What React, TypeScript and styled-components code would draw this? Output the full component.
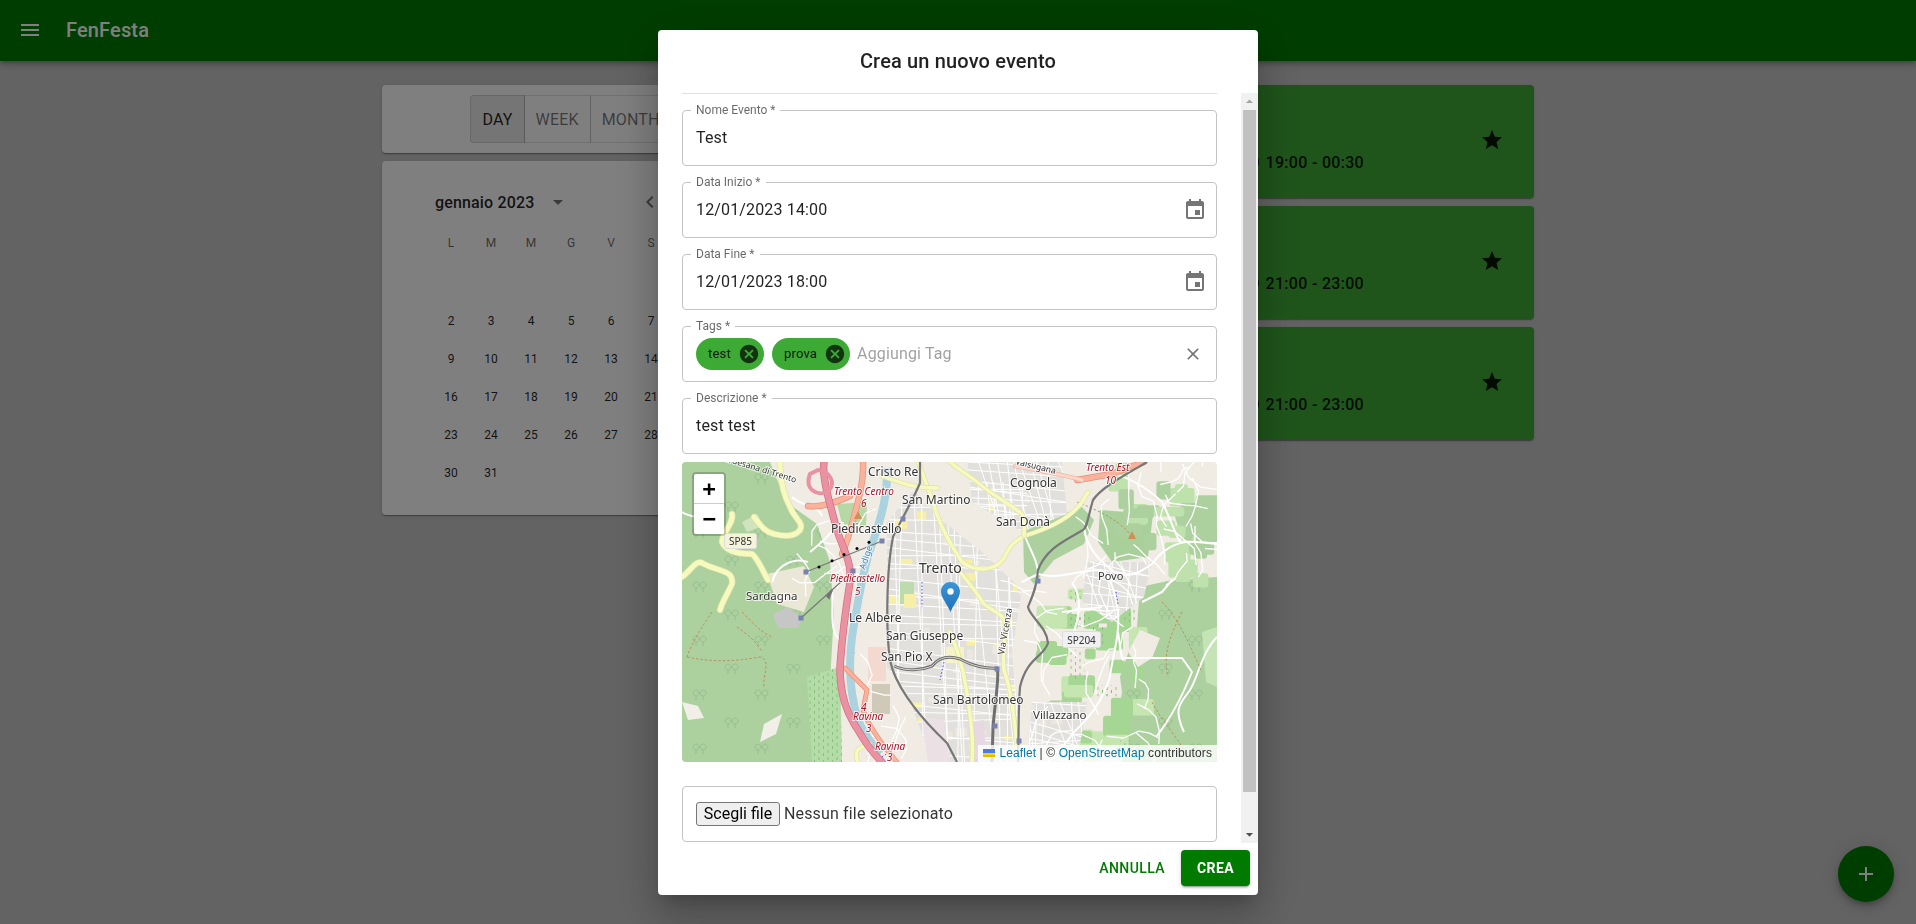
import React from 'react';
import styled, { createGlobalStyle } from 'styled-components';
import {
    MdAccessTime,
    MdAdd,
    MdArrowDropDown,
    MdArrowDropUp,
    MdCancel,
    MdChevronLeft,
    MdChevronRight,
    MdClose,
    MdEvent,
    MdMenu,
    MdStar,
} from 'react-icons/md';

const GREEN = '#007b00';
const LIGHT_GREEN = '#3eaa36';

const Global = createGlobalStyle`
    html, body { margin: 0; height: 100%; overflow: hidden; }
    body { background: #c6c6c6; font-family: Roboto, "Liberation Sans", sans-serif; color: rgba(0, 0, 0, 0.87); }
    * { box-sizing: border-box; }
`;

const Bar = styled.header`
    height: 61px;
    background: ${GREEN};
    color: #fff;
    display: flex;
    align-items: center;
    padding: 0 18px 2px;
    gap: 24px;
    box-shadow: 0 2px 4px -1px rgba(0, 0, 0, 0.2), 0 4px 5px 0 rgba(0, 0, 0, 0.14), 0 1px 10px 0 rgba(0, 0, 0, 0.12);
`;

const Brand = styled.div`
    font-size: 20px;
    font-weight: 500;
    letter-spacing: 0.15px;
`;

const Container = styled.main`
    width: 1152px;
    margin: 24px auto 0;
    display: grid;
    grid-template-columns: 378px 1fr;
    gap: 8px;
`;

const Column = styled.div`
    display: flex;
    flex-direction: column;
    gap: 8px;
`;

const Paper = styled.section`
    background: #fff;
    border-radius: 4px;
    box-shadow: 0 2px 1px -1px rgba(0, 0, 0, 0.2), 0 1px 1px 0 rgba(0, 0, 0, 0.14), 0 1px 3px 0 rgba(0, 0, 0, 0.12);
`;

const ViewPaper = styled(Paper)`
    height: 68px;
    display: flex;
    justify-content: center;
    align-items: center;
`;

const ToggleGroup = styled.div`
    display: flex;
    height: 48px;
`;

const Toggle = styled.button<{ $active?: boolean }>`
    font: 400 16px Roboto, sans-serif;
    letter-spacing: 0.15px;
    padding: 0 11px;
    border: 1px solid rgba(0, 0, 0, 0.12);
    margin-left: -1px;
    color: ${(p) => (p.$active ? 'rgba(0,0,0,0.87)' : 'rgba(0,0,0,0.54)')};
    background: ${(p) => (p.$active ? 'rgba(0,0,0,0.08)' : 'transparent')};
    &:first-child { border-radius: 4px 0 0 4px; margin-left: 0; }
    &:last-child { border-radius: 0 4px 4px 0; }
`;

const CalendarPaper = styled(Paper)`
    height: 354px;
    padding-top: 27px;
`;

const Calendar = styled.div`
    width: 280px;
    margin: 0 auto;
`;

const MonthRow = styled.div`
    height: 28px;
    padding-left: 4px;
    display: flex;
    align-items: center;
    color: rgba(0, 0, 0, 0.54);
`;

const MonthName = styled.span`
    font-size: 16px;
    font-weight: 500;
    letter-spacing: 0.15px;
    color: rgba(0, 0, 0, 0.87);
    margin-right: 12px;
`;

const MonthNav = styled.span`
    margin-left: auto;
    display: flex;
    gap: 16px;
    padding-right: 9px;
`;

const DayGrid = styled.div<{ $head?: boolean }>`
    display: grid;
    grid-template-columns: repeat(7, 40px);
    grid-auto-rows: 38px;
    margin-top: ${(p) => (p.$head ? '8px' : '2px')};
    font-size: 12px;
    color: ${(p) => (p.$head ? 'rgba(0,0,0,0.6)' : 'rgba(0,0,0,0.87)')};
`;

const DayCell = styled.span`
    display: flex;
    align-items: center;
    justify-content: center;
`;

const EventCard = styled.article`
    height: 113px;
    background: ${LIGHT_GREEN};
    border-radius: 4px;
    display: flex;
    align-items: center;
    justify-content: flex-end;
    padding-right: 30px;
    box-shadow: 0 2px 1px -1px rgba(0, 0, 0, 0.2), 0 1px 1px 0 rgba(0, 0, 0, 0.14), 0 1px 3px 0 rgba(0, 0, 0, 0.12);
    > svg { margin-top: -3px; }
`;

const EventTime = styled.div`
    display: flex;
    align-items: center;
    gap: 5px;
    margin: 41px 116px 0 0;
    font-size: 16px;
    font-weight: 500;
    letter-spacing: 0.3px;
`;

const Fab = styled.button`
    position: fixed;
    right: 22px;
    bottom: 22px;
    width: 56px;
    height: 56px;
    border: 0;
    border-radius: 50%;
    background: ${GREEN};
    color: #fff;
    display: flex;
    align-items: center;
    justify-content: center;
    box-shadow: 0 3px 5px -1px rgba(0, 0, 0, 0.2), 0 6px 10px 0 rgba(0, 0, 0, 0.14), 0 1px 18px 0 rgba(0, 0, 0, 0.12);
`;

const Backdrop = styled.div`
    position: fixed;
    inset: 0;
    background: rgba(0, 0, 0, 0.5);
    display: flex;
    align-items: center;
    justify-content: center;
`;

const Dialog = styled.div`
    width: 600px;
    height: 865px;
    background: #fff;
    border-radius: 4px;
    display: flex;
    flex-direction: column;
    overflow: hidden;
    box-shadow: 0 11px 15px -7px rgba(0, 0, 0, 0.2), 0 24px 38px 3px rgba(0, 0, 0, 0.14), 0 9px 46px 8px rgba(0, 0, 0, 0.12);
`;

const DialogTitle = styled.h2`
    margin: 0;
    height: 63px;
    flex: none;
    display: flex;
    align-items: center;
    justify-content: center;
    font-size: 20px;
    font-weight: 500;
    letter-spacing: 0.15px;
`;

const DialogBody = styled.div`
    flex: 1;
    min-height: 0;
    display: flex;
`;

const Form = styled.div`
    flex: 1;
    min-width: 0;
    padding: 0 24px;
    overflow: hidden;
`;

const Divider = styled.hr`
    margin: 0;
    border: 0;
    border-top: 1px solid #e0e0e0;
    height: 17px;
`;

const Field = styled.div`
    position: relative;
    height: 56px;
    margin-bottom: 16px;
    padding: 0 13px;
    border: 1px solid #c4c4c4;
    border-radius: 4px;
    display: flex;
    align-items: center;
    font-size: 16px;
    letter-spacing: 0.15px;
    &:last-child { margin-bottom: 0; }
`;

const FieldLabel = styled.label`
    position: absolute;
    top: -7px;
    left: 8px;
    padding: 0 5px;
    background: #fff;
    font-size: 12px;
    line-height: 12px;
    letter-spacing: 0;
    color: rgba(0, 0, 0, 0.6);
`;

const FieldIcon = styled.span<{ $calendar?: boolean }>`
    margin-left: auto;
    margin-right: ${(p) => (p.$calendar ? '-4px' : '0')};
    display: flex;
    color: rgba(0, 0, 0, 0.54);
`;

const Chip = styled.span`
    height: 32px;
    border-radius: 16px;
    background: ${LIGHT_GREEN};
    display: inline-flex;
    align-items: center;
    padding: 0 4px 0 12px;
    gap: 7px;
    font-size: 13px;
    letter-spacing: 0.2px;
    margin-right: 8px;
    color: rgba(0, 0, 0, 0.87);
    svg { color: rgba(0, 0, 0, 0.7); }
`;

const Placeholder = styled.span`
    color: rgba(0, 0, 0, 0.38);
    font-size: 16px;
    margin-left: -1px;
`;

const FileButton = styled.button`
    height: 24px;
    width: 84px;
    padding: 0;
    margin-right: 4px;
    background: #efefef;
    border: 1px solid #767676;
    border-radius: 3px;
    font: 400 16px Roboto, sans-serif;
    color: #000;
`;

const FileName = styled.span`
    color: rgba(0, 0, 0, 0.8);
`;

const MapBox = styled.div`
    position: relative;
    height: 300px;
    margin: -8px 0 24px;
    border-radius: 4px;
    overflow: hidden;
    svg.map { display: block; width: 100%; height: 100%; }
`;

const ZoomControl = styled.div`
    position: absolute;
    top: 10px;
    left: 10px;
    width: 34px;
    border: 2px solid rgba(0, 0, 0, 0.2);
    border-radius: 4px;
    background-clip: padding-box;
`;

const ZoomButton = styled.div`
    height: 30px;
    background: #fff;
    color: #000;
    display: flex;
    align-items: center;
    justify-content: center;
    font: 700 22px "DejaVu Sans Mono", "Liberation Mono", monospace;
    &:first-child { border-bottom: 1px solid #ccc; border-radius: 2px 2px 0 0; }
    &:last-child { border-radius: 0 0 2px 2px; }
`;

const Attribution = styled.div`
    position: absolute;
    right: 0;
    bottom: 0;
    height: 17px;
    padding: 0 5px;
    display: flex;
    align-items: center;
    gap: 4px;
    background: rgba(255, 255, 255, 0.8);
    font: 12px "Liberation Sans", Arial, sans-serif;
    letter-spacing: 0.1px;
    color: #333;
    white-space: pre;
`;

const AttrLink = styled.a`
    color: #0078a8;
`;

const Scrollbar = styled.div`
    flex: none;
    width: 17px;
    background: #f1f1f1;
    display: flex;
    flex-direction: column;
    align-items: center;
`;

const ScrollArrow = styled.div`
    flex: none;
    height: 17px;
    width: 17px;
    display: flex;
    align-items: center;
    justify-content: center;
    color: #a3a3a3;
    &:last-child { color: #505050; }
`;

const ScrollThumb = styled.div`
    width: 13px;
    height: 682px;
    background: #c1c1c1;
`;

const ScrollGap = styled.div`
    flex: 1;
`;

const DialogActions = styled.div`
    height: 52px;
    flex: none;
    display: flex;
    align-items: center;
    justify-content: flex-end;
    padding: 0 8px 1px;
    gap: 8px;
`;

const TextButton = styled.button`
    height: 36px;
    padding: 0 8px;
    border: 0;
    background: none;
    color: ${GREEN};
    font: 500 14px Roboto, sans-serif;
    letter-spacing: 0.4px;
`;

const SolidButton = styled.button`
    height: 36px;
    width: 69px;
    border: 0;
    border-radius: 4px;
    background: ${GREEN};
    color: #fff;
    font: 700 14px Roboto, sans-serif;
    letter-spacing: 0.4px;
    box-shadow: 0 3px 1px -2px rgba(0, 0, 0, 0.2), 0 2px 2px 0 rgba(0, 0, 0, 0.14), 0 1px 5px 0 rgba(0, 0, 0, 0.12);
`;

const FlagIcon = styled.svg`
    width: 12px;
    height: 8px;
`;

const MapLabel = styled.text<{ $tone?: 'place' | 'exit' | 'water' }>`
    font-family: 'Noto Sans', 'Open Sans', sans-serif;
    font-style: ${(p) => (p.$tone === 'exit' ? 'italic' : 'normal')};
    fill: ${(p) => (p.$tone === 'exit' ? '#a6162b' : p.$tone === 'water' ? '#4f7fb0' : '#333')};
    stroke: #fff;
    stroke-width: 2px;
    stroke-opacity: 0.75;
    paint-order: stroke;
`;

// small seeded generator, the map detail has to stay the same between runs
function seeded(seed: number) {
    let s = seed;
    return () => {
        s = (s * 9301 + 49297) % 233280;
        return s / 233280;
    };
}

function streetGrid(x: number, y: number, w: number, h: number, step: number, seed: number) {
    const rnd = seeded(seed);
    let d = '';
    for (let i = x; i < x + w; i += step * (0.7 + rnd() * 0.8)) {
        d += `M${i.toFixed(1)} ${y}L${(i + 40 * rnd() - 10).toFixed(1)} ${y + h}`;
    }
    for (let j = y; j < y + h; j += step * (0.7 + rnd() * 0.8)) {
        d += `M${x} ${j.toFixed(1)}L${x + w} ${(j + 30 * rnd() - 5).toFixed(1)}`;
    }
    return d;
}

function wiggles(x: number, y: number, w: number, h: number, count: number, seed: number) {
    const rnd = seeded(seed);
    let d = '';
    for (let i = 0; i < count; i++) {
        let px = x + rnd() * w;
        let py = y + rnd() * h;
        let angle = rnd() * Math.PI * 2;
        d += `M${px.toFixed(1)} ${py.toFixed(1)}`;
        for (let k = 0; k < 4; k++) {
            angle += rnd() * 1.6 - 0.8;
            px += Math.cos(angle) * (6 + rnd() * 12);
            py += Math.sin(angle) * (6 + rnd() * 12);
            d += `L${px.toFixed(1)} ${py.toFixed(1)}`;
        }
    }
    return d;
}

function patches(x: number, y: number, w: number, h: number, count: number, seed: number, size = 1) {
    const rnd = seeded(seed);
    const out = [];
    for (let i = 0; i < count; i++) {
        out.push({ x: x + rnd() * w, y: y + rnd() * h, w: (4 + rnd() * 9) * size, h: (3 + rnd() * 7) * size });
    }
    return out;
}

const yellowRoads = [
    'M98 0C98 15 100 30 108 45C113 58 122 60 118 68C112 76 100 74 92 72C82 70 78 62 72 55',
    'M50 52C52 62 40 70 40 80C44 90 58 92 70 92C76 96 82 112 86 118',
    'M0 115C10 108 14 96 22 102C38 110 52 108 50 122C44 135 40 140 38 148',
    'M236 0C244 20 250 38 256 55C262 72 270 84 280 100C296 112 318 108 324 92C330 80 336 78 342 74C362 68 388 58 400 40L406 30',
    'M268 0C280 10 290 15 300 24C312 34 328 42 340 52C344 60 342 66 342 74',
    'M278 110C288 122 296 132 302 142C312 150 322 152 324 162C322 180 320 195 322 208C328 225 332 245 336 300',
    'M268 170C274 185 280 200 284 225C288 250 292 275 290 300',
    'M200 14C216 20 230 26 256 26',
    'M176 300C172 290 174 286 188 282',
];

const whiteRoads = [
    'M402 66C406 90 420 100 432 110C450 118 460 108 470 102C480 88 495 78 515 80L535 82',
    'M356 112C378 118 396 108 418 108C428 112 432 126 436 150C438 175 430 195 428 215C420 240 408 255 392 270C382 285 372 292 366 300',
    'M436 170L440 196H500L510 210C500 235 490 255 474 275',
    'M342 72C350 92 356 100 356 112L340 120',
    'M420 12C440 8 470 30 480 40C488 55 492 70 498 80',
    'M460 140L480 130 490 118',
    'M380 150L420 145',
    'M535 175C520 190 516 215 508 228C500 240 490 245 502 270',
    'M390 120C400 135 398 150 392 170',
    'M0 50C6 55 20 55 30 60',
    'M110 35C120 45 136 42 140 54',
    'M128 90C140 80 150 72 156 60',
    'M90 120C96 100 114 96 126 100',
    'M150 130C152 150 146 170 160 180',
];

const places: [string, number, number, number][] = [
    ['Cristo Re', 186, 14, 12],
    ['San Martino', 220, 42, 12],
    ['Cognola', 328, 25, 12],
    ['San Donà', 314, 64, 12],
    ['Piedicastello', 149, 71, 12],
    ['Trento', 237, 111, 14],
    ['Povo', 416, 118, 11],
    ['Sardagna', 64, 138, 11.5],
    ['Le Albere', 167, 160, 12],
    ['San Giuseppe', 204, 178, 12],
    ['San Pio X', 199, 199, 12],
    ['San Bartolomeo', 251, 242, 12],
    ['Villazzano', 351, 257, 11.5],
];

const exits: [string, number, number][] = [
    ['Trento Centro', 152, 33],
    ['6', 179, 45],
    ['Piedicastello', 148, 120],
    ['5', 173, 133],
    ['4', 179, 249],
    ['Ravina', 171, 258],
    ['3', 184, 270],
    ['Ravina', 193, 288],
    ['3', 205, 299],
    ['Trento Est', 404, 9],
    ['10', 423, 22],
];

const stations: [number, number][] = [
    [221, 57],
    [356, 119],
    [315, 207],
    [313, 264],
    [337, 279],
    [124, 110],
    [200, 79],
    [171, 109],
    [119, 156],
];

const WEST_WOOD = 'M0 0H88L104 40 135 62 148 100 152 150 148 220 150 300H0Z';
const EAST_WOOD = 'M458 125 490 118 535 115V300H438L432 280 440 230 438 215 455 165Z';

function MapRoad({ d, w, fill, edge }: { d: string; w: number; fill: string; edge: string }) {
    return (
        <g fill='none' strokeLinecap='round' strokeLinejoin='round'>
            <path d={d} stroke={edge} strokeWidth={w + 1.4} />
            <path d={d} stroke={fill} strokeWidth={w} />
        </g>
    );
}

function TrentoMap() {
    return (
        <svg className='map' viewBox='0 0 535 300'>
            <defs>
                <pattern id='trees' width='62' height='54' patternUnits='userSpaceOnUse'>
                    <path
                        d='M14 18a3 3 0 1 1 .1 0zM14 18v4M21 18a3 3 0 1 1 .1 0zM21 18v4M46 46a3 3 0 1 1 .1 0zM46 46v4M53 46a3 3 0 1 1 .1 0zM53 46v4'
                        fill='none'
                        stroke='#8fb98a'
                        strokeWidth='0.8'
                    />
                </pattern>
                <pattern id='orchard' width='9' height='7' patternUnits='userSpaceOnUse'>
                    <path d='M2 1v3M6.5 4v3' stroke='#7fb878' strokeWidth='0.8' />
                </pattern>
                <clipPath id='urban'>
                    <path d='M205 60 232 28 262 60 300 90 340 128 330 190 340 300 250 300 225 230 205 205Z' />
                    <path d='M285 0H380L385 52 340 70 290 40Z' />
                    <path d='M405 100H470L462 135 430 160 400 140Z' />
                    <path d='M350 240 405 240 395 300 345 300Z' />
                </clipPath>
                <linearGradient id='pin' x1='0' y1='0' x2='0' y2='1'>
                    <stop offset='0' stopColor='#3a95d8' />
                    <stop offset='1' stopColor='#1f72b8' />
                </linearGradient>
            </defs>

            <rect width='535' height='300' fill='#f0ece4' />

            {/* woods on both sides of the valley */}
            <path d={WEST_WOOD} fill='#add19e' />
            <path d={WEST_WOOD} fill='url(#trees)' />
            <path d={EAST_WOOD} fill='#add19e' />
            <path d={EAST_WOOD} fill='url(#trees)' />
            <path d='M341 68 400 45 412 58 402 82 372 98 352 122 342 110Z' fill='#add19e' />
            <path d='M418 48 471 52 466 95 430 100 416 80Z' fill='#a9d09a' />
            <path d='M491 48 535 42V82L500 78Z' fill='#add19e' />
            <path d='M301 0H325V20L305 21Z' fill='#c8f0c8' />
            <path d='M155 42 185 40 184 64 160 62Z' fill='#b5d8a5' />
            <path d='M125 215 158 205 160 300H130Z' fill='#b4dca6' />
            <path d='M125 215 158 205 160 300H130Z' fill='url(#orchard)' />

            {/* farmland on the eastern slope */}
            {patches(345, 122, 105, 170, 34, 5, 2.6).map((b, i) => (
                <rect key={i} x={b.x} y={b.y} width={b.w} height={b.h} rx='3' fill={i % 3 ? '#a6d693' : '#c5e6b0'} />
            ))}
            {patches(345, 122, 105, 170, 12, 17, 2.2).map((b, i) => (
                <rect key={i} x={b.x} y={b.y} width={b.w} height={b.h} fill='url(#orchard)' />
            ))}
            {patches(425, 0, 110, 112, 26, 9, 2.4).map((b, i) => (
                <rect key={i} x={b.x} y={b.y} width={b.w} height={b.h} rx='3' fill={i % 2 ? '#add19e' : '#bfe2ad'} />
            ))}
            <path d='M458 168 478 176 470 196 456 205 446 190Z' fill='#f0ece4' />

            {/* clearings and villages */}
            <path d='M85 112 122 104 132 125 122 150 95 142Z' fill='#ebe7d6' />
            <path d='M82 262 100 252 94 272 78 280Z' fill='#f2efe9' />
            <path d='M0 240 16 244 22 256 6 258Z' fill='#f2efe9' />
            <path d='M91 152 106 145 120 156 116 166 96 166Z' fill='#c6c6c6' />
            <path d='M60 60 75 52 82 64 65 70Z' fill='#cfe3bc' />
            <path d='M520 170 535 165V225L524 220Z' fill='#c4e4b6' />

            {/* built up area */}
            <g clipPath='url(#urban)'>
                <rect width='535' height='300' fill='#e2e0dc' />
                {patches(205, 30, 180, 270, 70, 11).map((b, i) => (
                    <rect key={i} x={b.x} y={b.y} width={b.w} height={b.h} fill={i % 3 ? '#ece8e0' : '#f5efa8'} />
                ))}
                <path d={streetGrid(195, 20, 150, 280, 8, 7)} stroke='#fff' strokeWidth='1' fill='none' />
                <path d={streetGrid(285, 0, 100, 70, 8, 23)} stroke='#fff' strokeWidth='1' fill='none' />
                <path d={streetGrid(400, 98, 72, 65, 8, 41)} stroke='#fff' strokeWidth='1' fill='none' />
                <path d={streetGrid(345, 240, 60, 60, 8, 31)} stroke='#fff' strokeWidth='1' fill='none' />
            </g>
            <rect x='186' y='185' width='18' height='34' fill='#f3d9cf' />
            <rect x='190' y='222' width='18' height='30' fill='#cfc9b8' />
            <path d='M240 255 262 258 268 300H246Z' fill='#ebe0e4' />
            <path d='M288 260 302 258 304 300H292Z' fill='#e8d8e4' />
            <rect x='264' y='185' width='18' height='16' fill='#f6f3c9' />
            <rect x='218' y='120' width='14' height='22' fill='#bcdcb0' />
            <rect x='222' y='132' width='12' height='14' fill='#f5efa8' />

            <g fill='none' stroke='#fff' strokeLinejoin='round'>
                <path d={whiteRoads.join('')} strokeWidth='2' />
                <path d={wiggles(345, 110, 120, 190, 26, 3)} strokeWidth='1.3' />
                <path d={wiggles(420, 0, 115, 112, 22, 13)} strokeWidth='1.3' />
                <path d={wiggles(100, 30, 65, 110, 9, 29)} strokeWidth='1.3' />
                <path d={wiggles(168, 210, 45, 85, 7, 37)} strokeWidth='1.3' />
            </g>

            {/* trails */}
            <path
                d='M5 195C30 200 50 200 78 195C90 198 80 215 82 225M55 165C65 172 75 180 80 190M30 150C20 165 10 180 5 195M480 140C500 160 510 190 520 210M470 240C480 260 500 280 505 295M395 40C420 50 440 60 450 75M60 150C70 160 78 170 90 175M500 150C490 170 480 190 486 215'
                fill='none'
                stroke='#b9824d'
                strokeWidth='0.8'
                strokeDasharray='2.5 2'
            />
            <path
                d='M172 190C168 215 165 240 175 262M240 120V145M200 295L215 285M262 200L258 218M434 130L436 142'
                fill='none'
                stroke='#3c3cf0'
                strokeWidth='0.9'
                strokeDasharray='1.5 2'
            />

            {/* river and main roads */}
            <path
                d='M205 6C206 30 201 52 188 88C180 112 174 150 170 175C166 205 168 232 176 258C182 272 190 282 198 292'
                fill='none'
                stroke='#aad3df'
                strokeWidth='8'
            />
            {yellowRoads.map((d, i) => (
                <MapRoad key={i} d={d} w={i < 3 ? 5 : 3.5} fill='#f7fabf' edge='#dfe0a6' />
            ))}
            <MapRoad d='M181 0C182 20 176 40 171 58C168 70 165 80 160 92M126 44C140 46 155 40 168 34' w={5} fill='#f9b29c' edge='#e88f78' />
            <MapRoad d='M163 206 185 228 181 248C186 262 196 278 215 300' w={3.5} fill='#f9b29c' edge='#e88f78' />
            <MapRoad d='M395 18 430 12 462 0' w={5} fill='#f9b29c' edge='#e88f78' />
            <MapRoad d='M333 4C355 8 385 14 400 18' w={3} fill='#fcd6c8' edge='#e8b8a6' />
            <MapRoad
                d='M142 0C140 14 146 36 155 68C162 90 170 100 168 120C164 145 160 175 158 205C158 232 164 250 176 268C184 282 192 292 200 300'
                w={6}
                fill='#e892a2'
                edge='#d66a80'
            />
            <path d='M128 12C122 28 136 34 144 30C156 24 148 8 136 8Z' fill='none' stroke='#e892a2' strokeWidth='4' />

            {/* railways */}
            <path
                d='M238 0V21C230 40 218 60 211 75C204 110 204 170 208 198C212 220 232 250 265 281L275 300M465 0C440 15 420 25 411 38C406 55 405 66 401 68C385 78 365 85 356 108C355 125 350 135 346 145C348 155 365 165 366 181C362 195 345 195 338 225C336 250 337 270 336 300'
                fill='none'
                stroke='#777'
                strokeWidth='2.2'
            />
            <path
                d='M212 204C225 210 240 208 250 204C258 194 268 194 278 197C290 204 305 207 315 206C318 212 313 240 311 265L310 300'
                fill='none'
                stroke='#6f6f6f'
                strokeWidth='3'
            />
            <path d='M212 204C225 210 240 208 250 204C258 194 268 194 278 197C290 204 305 207 315 206' fill='none' stroke='#fff' strokeWidth='0.7' />

            {/* cable cars */}
            <path d='M124 110 200 79M119 156 171 109' stroke='#777' strokeWidth='1.1' />
            {[137, 150, 162, 175, 187].map((x, i) => (
                <circle key={x} cx={x} cy={105 - i * 6.2} r='1.5' fill='#000' />
            ))}
            <path d='M145 134 150 128 147 136Z' stroke='#777' strokeWidth='2' />
            {stations.map(([x, y]) => (
                <rect key={`${x}-${y}`} x={x - 2.5} y={y - 2.5} width='5' height='5' fill='#7981b1' />
            ))}
            <path d='M450 69 454 77H446ZM176 49 180 57H172Z' fill='#cf8f57' />

            {/* labels */}
            {places.map(([name, x, y, size]) => (
                <MapLabel key={name} x={x} y={y} fontSize={size}>
                    {name}
                </MapLabel>
            ))}
            {exits.map(([name, x, y], i) => (
                <MapLabel key={i} $tone='exit' x={x} y={y} fontSize='10'>
                    {name}
                </MapLabel>
            ))}
            <MapLabel $tone='water' x='0' y='0' fontSize='9' transform='translate(183 108) rotate(-72)'>
                Adige
            </MapLabel>
            <MapLabel x='0' y='0' fontSize='9' transform='translate(322 193) rotate(-80)'>
                Via Vicenza
            </MapLabel>
            <MapLabel x='0' y='0' fontSize='8.5' transform='translate(36 -3) rotate(17)'>
                Gardesana di Trento
            </MapLabel>
            <MapLabel x='0' y='0' fontSize='8.5' transform='translate(333 2) rotate(14)'>
                Valsugana
            </MapLabel>

            <rect x='42.5' y='71.5' width='32' height='15' rx='2' fill='#f4f4da' stroke='#ddd' />
            <text x='58.5' y='83' fontSize='10' fontFamily='Noto Sans, sans-serif' textAnchor='middle' fill='#333'>
                SP85
            </text>
            <rect x='380.5' y='169.5' width='38' height='16' rx='2' fill='#f1f1f1' stroke='#ddd' />
            <text x='399.5' y='181.5' fontSize='10' fontFamily='Noto Sans, sans-serif' textAnchor='middle' fill='#333'>
                SP204
            </text>

            {/* marker */}
            <path
                d='M268.5 120C262.5 120 259 124.8 259 129.5C259 136 266 143 268.5 150C271 143 278 136 278 129.5C278 124.8 274.5 120 268.5 120Z'
                fill='url(#pin)'
            />
            <circle cx='268.5' cy='129.5' r='3.2' fill='#fff' />
        </svg>
    );
}

const weekdays = ['L', 'M', 'M', 'G', 'V', 'S', 'D'];
const days = [...Array(6).fill(''), ...Array.from({ length: 31 }, (_, i) => String(i + 1))];
const events = ['19:00 - 00:30', '21:00 - 23:00', '21:00 - 23:00'];

export default function App() {
    return (
        <>
            <Global />
            <Bar>
                <MdMenu size={24} />
                <Brand>FenFesta</Brand>
            </Bar>

            <Container>
                <Column>
                    <ViewPaper>
                        <ToggleGroup>
                            <Toggle $active>DAY</Toggle>
                            <Toggle>WEEK</Toggle>
                            <Toggle>MONTH</Toggle>
                        </ToggleGroup>
                    </ViewPaper>
                    <CalendarPaper>
                        <Calendar>
                            <MonthRow>
                                <MonthName>gennaio 2023</MonthName>
                                <MdArrowDropDown size={24} />
                                <MonthNav>
                                    <MdChevronLeft size={24} />
                                    <MdChevronRight size={24} />
                                </MonthNav>
                            </MonthRow>
                            <DayGrid $head>
                                {weekdays.map((d, i) => (
                                    <DayCell key={i}>{d}</DayCell>
                                ))}
                            </DayGrid>
                            <DayGrid>
                                {days.map((d, i) => (
                                    <DayCell key={i}>{d}</DayCell>
                                ))}
                            </DayGrid>
                        </Calendar>
                    </CalendarPaper>
                </Column>
                <Column>
                    {events.map((time, i) => (
                        <EventCard key={i}>
                            <EventTime>
                                <MdAccessTime size={24} />
                                {time}
                            </EventTime>
                            <MdStar size={24} />
                        </EventCard>
                    ))}
                </Column>
            </Container>

            <Fab>
                <MdAdd size={24} />
            </Fab>

            <Backdrop>
                <Dialog>
                    <DialogTitle>Crea un nuovo evento</DialogTitle>
                    <DialogBody>
                        <Form>
                            <Divider />
                            <Field>
                                <FieldLabel>Nome Evento *</FieldLabel>
                                Test
                            </Field>
                            <Field>
                                <FieldLabel>Data Inizio *</FieldLabel>
                                12/01/2023 14:00
                                <FieldIcon $calendar>
                                    <MdEvent size={24} />
                                </FieldIcon>
                            </Field>
                            <Field>
                                <FieldLabel>Data Fine *</FieldLabel>
                                12/01/2023 18:00
                                <FieldIcon $calendar>
                                    <MdEvent size={24} />
                                </FieldIcon>
                            </Field>
                            <Field>
                                <FieldLabel>Tags *</FieldLabel>
                                <Chip>
                                    test
                                    <MdCancel size={22} />
                                </Chip>
                                <Chip>
                                    prova
                                    <MdCancel size={22} />
                                </Chip>
                                <Placeholder>Aggiungi Tag</Placeholder>
                                <FieldIcon>
                                    <MdClose size={20} />
                                </FieldIcon>
                            </Field>
                            <Field>
                                <FieldLabel>Descrizione *</FieldLabel>
                                test test
                            </Field>
                            <MapBox>
                                <TrentoMap />
                                <ZoomControl>
                                    <ZoomButton>+</ZoomButton>
                                    <ZoomButton>−</ZoomButton>
                                </ZoomControl>
                                <Attribution>
                                    <FlagIcon viewBox='0 0 12 8'>
                                        <rect width='12' height='4' fill='#4c7be1' />
                                        <rect y='4' width='12' height='2' fill='#ffd500' />
                                        <rect y='6' width='12' height='2' fill='#e0bc00' />
                                    </FlagIcon>
                                    <span>
                                        <AttrLink>Leaflet</AttrLink> | © <AttrLink>OpenStreetMap</AttrLink> contributors
                                    </span>
                                </Attribution>
                            </MapBox>
                            <Field>
                                <FileButton>Scegli file</FileButton>
                                <FileName>Nessun file selezionato</FileName>
                            </Field>
                        </Form>
                        <Scrollbar>
                            <ScrollArrow>
                                <MdArrowDropUp size={17} />
                            </ScrollArrow>
                            <ScrollThumb />
                            <ScrollGap />
                            <ScrollArrow>
                                <MdArrowDropDown size={17} />
                            </ScrollArrow>
                        </Scrollbar>
                    </DialogBody>
                    <DialogActions>
                        <TextButton>ANNULLA</TextButton>
                        <SolidButton>CREA</SolidButton>
                    </DialogActions>
                </Dialog>
            </Backdrop>
        </>
    );
}
